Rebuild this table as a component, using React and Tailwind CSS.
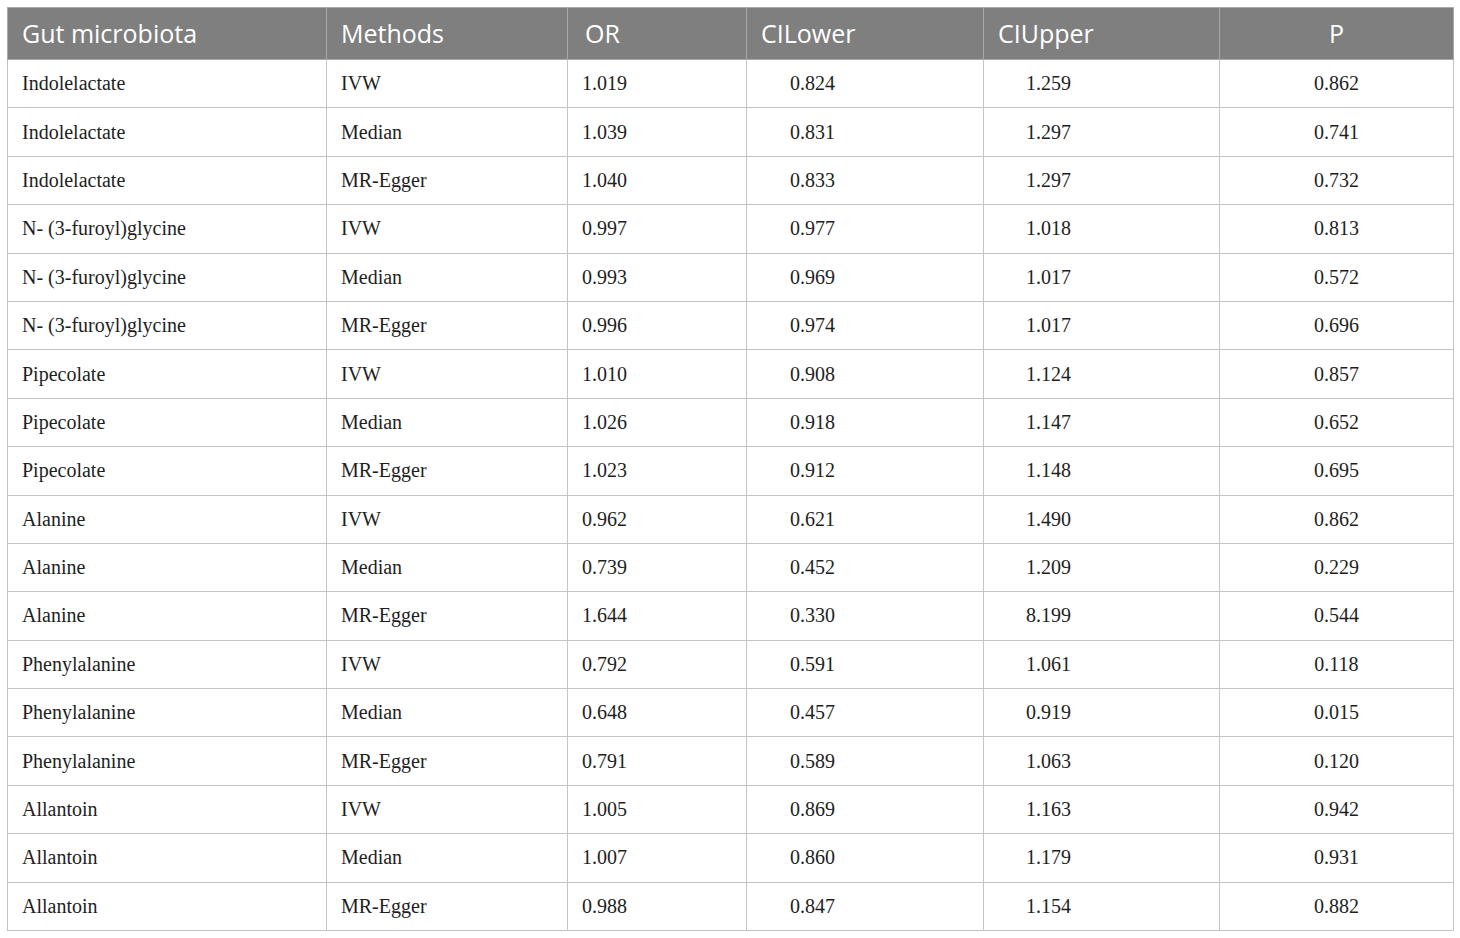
import React from "react";

const rows = [
  ["Indolelactate", "IVW", "1.019", "0.824", "1.259", "0.862"],
  ["Indolelactate", "Median", "1.039", "0.831", "1.297", "0.741"],
  ["Indolelactate", "MR-Egger", "1.040", "0.833", "1.297", "0.732"],
  ["N- (3-furoyl)glycine", "IVW", "0.997", "0.977", "1.018", "0.813"],
  ["N- (3-furoyl)glycine", "Median", "0.993", "0.969", "1.017", "0.572"],
  ["N- (3-furoyl)glycine", "MR-Egger", "0.996", "0.974", "1.017", "0.696"],
  ["Pipecolate", "IVW", "1.010", "0.908", "1.124", "0.857"],
  ["Pipecolate", "Median", "1.026", "0.918", "1.147", "0.652"],
  ["Pipecolate", "MR-Egger", "1.023", "0.912", "1.148", "0.695"],
  ["Alanine", "IVW", "0.962", "0.621", "1.490", "0.862"],
  ["Alanine", "Median", "0.739", "0.452", "1.209", "0.229"],
  ["Alanine", "MR-Egger", "1.644", "0.330", "8.199", "0.544"],
  ["Phenylalanine", "IVW", "0.792", "0.591", "1.061", "0.118"],
  ["Phenylalanine", "Median", "0.648", "0.457", "0.919", "0.015"],
  ["Phenylalanine", "MR-Egger", "0.791", "0.589", "1.063", "0.120"],
  ["Allantoin", "IVW", "1.005", "0.869", "1.163", "0.942"],
  ["Allantoin", "Median", "1.007", "0.860", "1.179", "0.931"],
  ["Allantoin", "MR-Egger", "0.988", "0.847", "1.154", "0.882"],
];

const widths = ["w-[319px]", "w-[241px]", "w-[179px]", "w-[237px]", "w-[236px]", "w-[234px]"];
const headers = ["Gut microbiota", "Methods", "OR", "CILower", "CIUpper", "P"];

const headPad = ["pl-[14px] text-left", "pl-[14px] text-left", "pl-[17px] text-left", "pl-[14px] text-left", "pl-[14px] text-left", "text-center"];
const cellPad = ["pl-[14px] text-left", "pl-[14px] text-left", "pl-[14px] text-left", "pl-[43px] text-left", "pl-[42px] text-left", "text-center"];

export default function App() {
  return (
    <div className="w-[1460px] h-[938px] bg-white pt-[7px] pl-[7px]">
      <table className="table-fixed border-collapse w-[1446px] border border-[#c4c4c4]">
        <thead>
          <tr className="bg-[#7f7f7f] h-[52px]">
            {headers.map((h, i) => (
              <th
                key={i}
                className={`${widths[i]} ${headPad[i]} border border-[#a9a9a9] text-white font-normal text-[25px] leading-none p-0 align-middle font-['Open_Sans',sans-serif]`}
              >
                {h}
              </th>
            ))}
          </tr>
        </thead>
        <tbody>
          {rows.map((r, ri) => (
            <tr key={ri} className="h-[48.4px]">
              {r.map((c, ci) => (
                <td
                  key={ci}
                  className={`${cellPad[ci]} border border-[#c4c4c4] text-[#1e1e1e] text-[20px] leading-none align-middle pb-[1px] font-['Liberation_Serif',serif]`}
                >
                  {c}
                </td>
              ))}
            </tr>
          ))}
        </tbody>
      </table>
    </div>
  );
}
